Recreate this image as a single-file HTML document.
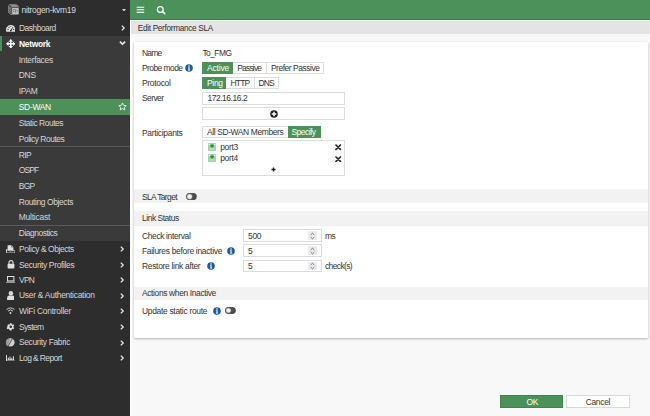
<!DOCTYPE html>
<html><head><meta charset="utf-8"><style>
html,body{margin:0;padding:0;}
body{width:650px;height:416px;overflow:hidden;position:relative;background:#f8f8f8;font-family:"Liberation Sans",sans-serif;}
body>div,body>svg{position:absolute;}
.t{white-space:nowrap;line-height:1;}
</style></head><body>
<div style="left:0.00px;top:0.00px;width:130.00px;height:416.00px;background:#2d2d2d"></div>
<div style="left:0.00px;top:35.60px;width:130.00px;height:205.40px;background:#3a3a3a"></div>
<div style="left:0.00px;top:35.60px;width:2.00px;height:15.90px;background:#4c9159"></div>
<div style="left:0.00px;top:146.20px;width:130.00px;height:1.00px;background:#5a5a5a"></div>
<div style="left:0.00px;top:224.60px;width:130.00px;height:1.00px;background:#5a5a5a"></div>
<div style="left:0.00px;top:98.50px;width:130.00px;height:16.20px;background:#4c9159"></div>
<div class="t" style="left:21.60px;top:6.00px;font-size:8.45px;letter-spacing:-0.3px;color:#dcdcdc;font-weight:normal;">nitrogen-kvm19</div>
<div class="t" style="left:19.00px;top:24.00px;font-size:8.45px;letter-spacing:-0.5px;color:#d6d6d6;font-weight:normal;">Dashboard</div>
<div class="t" style="left:19.00px;top:40.00px;font-size:8.45px;letter-spacing:-0.3px;color:#ffffff;font-weight:bold;">Network</div>
<div class="t" style="left:18.80px;top:56.00px;font-size:8.45px;letter-spacing:-0.3px;color:#d6d6d6;font-weight:normal;">Interfaces</div>
<div class="t" style="left:18.80px;top:71.00px;font-size:8.45px;letter-spacing:-0.3px;color:#d6d6d6;font-weight:normal;">DNS</div>
<div class="t" style="left:18.80px;top:87.00px;font-size:8.45px;letter-spacing:-0.3px;color:#d6d6d6;font-weight:normal;">IPAM</div>
<div class="t" style="left:18.80px;top:103.00px;font-size:8.45px;letter-spacing:-0.3px;color:#ffffff;font-weight:normal;">SD-WAN</div>
<div class="t" style="left:18.80px;top:119.00px;font-size:8.45px;letter-spacing:-0.45px;color:#d6d6d6;font-weight:normal;">Static Routes</div>
<div class="t" style="left:18.80px;top:135.00px;font-size:8.45px;letter-spacing:-0.47px;color:#d6d6d6;font-weight:normal;">Policy Routes</div>
<div class="t" style="left:18.80px;top:151.00px;font-size:8.45px;letter-spacing:-0.6px;color:#d6d6d6;font-weight:normal;">RIP</div>
<div class="t" style="left:18.80px;top:166.00px;font-size:8.45px;letter-spacing:-0.85px;color:#d6d6d6;font-weight:normal;">OSPF</div>
<div class="t" style="left:18.80px;top:182.00px;font-size:8.45px;letter-spacing:-0.75px;color:#d6d6d6;font-weight:normal;">BGP</div>
<div class="t" style="left:18.80px;top:198.00px;font-size:8.45px;letter-spacing:-0.39px;color:#d6d6d6;font-weight:normal;">Routing Objects</div>
<div class="t" style="left:18.80px;top:213.00px;font-size:8.45px;letter-spacing:-0.22px;color:#d6d6d6;font-weight:normal;">Multicast</div>
<div class="t" style="left:18.80px;top:229.00px;font-size:8.45px;letter-spacing:-0.47px;color:#d6d6d6;font-weight:normal;">Diagnostics</div>
<div class="t" style="left:19.00px;top:245.00px;font-size:8.45px;letter-spacing:-0.42px;color:#d6d6d6;font-weight:normal;">Policy &amp; Objects</div>
<div class="t" style="left:19.00px;top:261.00px;font-size:8.45px;letter-spacing:-0.33px;color:#d6d6d6;font-weight:normal;">Security Profiles</div>
<div class="t" style="left:19.00px;top:276.00px;font-size:8.45px;letter-spacing:-0.75px;color:#d6d6d6;font-weight:normal;">VPN</div>
<div class="t" style="left:19.00px;top:291.00px;font-size:8.45px;letter-spacing:-0.26px;color:#d6d6d6;font-weight:normal;">User &amp; Authentication</div>
<div class="t" style="left:19.00px;top:307.00px;font-size:8.45px;letter-spacing:-0.25px;color:#d6d6d6;font-weight:normal;">WiFi Controller</div>
<div class="t" style="left:19.00px;top:323.00px;font-size:8.45px;letter-spacing:-0.62px;color:#d6d6d6;font-weight:normal;">System</div>
<div class="t" style="left:19.00px;top:338.00px;font-size:8.45px;letter-spacing:-0.35px;color:#d6d6d6;font-weight:normal;">Security Fabric</div>
<div class="t" style="left:19.00px;top:354.00px;font-size:8.45px;letter-spacing:-0.59px;color:#d6d6d6;font-weight:normal;">Log &amp; Report</div>
<svg style="left:119.60px;top:25.10px" width="6" height="6" viewBox="0 0 6 6"><path d="M1.8 0.6 L4.2 3 L1.8 5.4" fill="none" stroke="#e6e6e6" stroke-width="1.3"/></svg>
<svg style="left:119.40px;top:246.00px" width="6" height="6" viewBox="0 0 6 6"><path d="M1.8 0.6 L4.2 3 L1.8 5.4" fill="none" stroke="#e6e6e6" stroke-width="1.3"/></svg>
<svg style="left:119.40px;top:261.62px" width="6" height="6" viewBox="0 0 6 6"><path d="M1.8 0.6 L4.2 3 L1.8 5.4" fill="none" stroke="#e6e6e6" stroke-width="1.3"/></svg>
<svg style="left:119.40px;top:277.24px" width="6" height="6" viewBox="0 0 6 6"><path d="M1.8 0.6 L4.2 3 L1.8 5.4" fill="none" stroke="#e6e6e6" stroke-width="1.3"/></svg>
<svg style="left:119.40px;top:292.86px" width="6" height="6" viewBox="0 0 6 6"><path d="M1.8 0.6 L4.2 3 L1.8 5.4" fill="none" stroke="#e6e6e6" stroke-width="1.3"/></svg>
<svg style="left:119.40px;top:308.48px" width="6" height="6" viewBox="0 0 6 6"><path d="M1.8 0.6 L4.2 3 L1.8 5.4" fill="none" stroke="#e6e6e6" stroke-width="1.3"/></svg>
<svg style="left:119.40px;top:324.10px" width="6" height="6" viewBox="0 0 6 6"><path d="M1.8 0.6 L4.2 3 L1.8 5.4" fill="none" stroke="#e6e6e6" stroke-width="1.3"/></svg>
<svg style="left:119.40px;top:339.72px" width="6" height="6" viewBox="0 0 6 6"><path d="M1.8 0.6 L4.2 3 L1.8 5.4" fill="none" stroke="#e6e6e6" stroke-width="1.3"/></svg>
<svg style="left:119.40px;top:355.34px" width="6" height="6" viewBox="0 0 6 6"><path d="M1.8 0.6 L4.2 3 L1.8 5.4" fill="none" stroke="#e6e6e6" stroke-width="1.3"/></svg>
<svg style="left:119.3px;top:40.4px" width="7" height="6" viewBox="0 0 7 6"><path d="M0.9 1.6 L3.5 4.2 L6.1 1.6" fill="none" stroke="#ececec" stroke-width="1.6"/></svg>
<svg style="left:121.8px;top:8.6px" width="4" height="2.6" viewBox="0 0 4 2.6"><path d="M0 0 L4 0 L2 2.6 Z" fill="#d0d0d0"/></svg>
<svg style="left:117.9px;top:101.9px" width="9" height="9" viewBox="0 0 24 24"><path d="M12 2.5 L14.9 8.9 L21.8 9.6 L16.6 14.3 L18.1 21.1 L12 17.6 L5.9 21.1 L7.4 14.3 L2.2 9.6 L9.1 8.9 Z" fill="none" stroke="#eaeaea" stroke-width="2.6" stroke-linejoin="round"/></svg>
<div style="left:130.00px;top:0.00px;width:520.00px;height:19.40px;background:#4c9159"></div>
<div style="left:130.00px;top:19.00px;width:520.00px;height:1.00px;background:#3f7a4b"></div>
<div style="left:130.00px;top:20.00px;width:520.00px;height:396.00px;background:#f8f8f8"></div>
<div style="left:130.00px;top:20.00px;width:2.20px;height:396.00px;background:#fdfdfd"></div>
<div style="left:131.00px;top:21.00px;width:519.00px;height:12.90px;background:#e4e4e4"></div>
<div class="t" style="left:137.80px;top:25.00px;font-size:8.2px;letter-spacing:-0.3px;color:#2e2e2e;font-weight:normal;">Edit Performance SLA</div>
<svg style="left:136px;top:6px" width="9" height="8" viewBox="0 0 9 8"><path d="M0.7 1.2 H8.2 M0.7 3.7 H8.2 M0.7 6.4 H8.2" stroke="#ffffff" stroke-width="1.1"/></svg>
<svg style="left:155.7px;top:5.2px" width="10" height="10" viewBox="0 0 10 10"><circle cx="4.3" cy="4.4" r="2.9" fill="none" stroke="#ffffff" stroke-width="1.25"/><path d="M6.3 6.4 L8.8 8.7" stroke="#ffffff" stroke-width="1.5" stroke-linecap="round"/></svg>
<div style="left:133.8px;top:41.6px;width:513.8px;height:296.4px;background:#fff;box-shadow:0 0.5px 2px rgba(0,0,0,0.28)"></div>
<div style="left:133.80px;top:188.60px;width:513.80px;height:14.80px;background:#f2f2f2"></div>
<div style="left:133.80px;top:211.00px;width:513.80px;height:14.50px;background:#f2f2f2"></div>
<div style="left:133.80px;top:286.50px;width:513.80px;height:13.70px;background:#f2f2f2"></div>
<div class="t" style="left:142.00px;top:49.00px;font-size:8.45px;letter-spacing:-0.8px;color:#333;font-weight:normal;">Name</div>
<div class="t" style="left:202.40px;top:49.00px;font-size:8.45px;letter-spacing:-0.55px;color:#333;font-weight:normal;">To_FMG</div>
<div class="t" style="left:142.00px;top:64.00px;font-size:8.45px;letter-spacing:-0.55px;color:#333;font-weight:normal;">Probe mode</div>
<div class="t" style="left:142.00px;top:79.00px;font-size:8.45px;letter-spacing:-0.3px;color:#333;font-weight:normal;">Protocol</div>
<div class="t" style="left:142.00px;top:94.00px;font-size:8.45px;letter-spacing:-0.56px;color:#333;font-weight:normal;">Server</div>
<div class="t" style="left:142.00px;top:129.00px;font-size:8.45px;letter-spacing:-0.3px;color:#333;font-weight:normal;">Participants</div>
<svg style="left:185.20px;top:63.60px" width="8" height="8" viewBox="0 0 8 8"><circle cx="4" cy="4" r="3.8" fill="#1e5c97"/><circle cx="4" cy="2.1" r="0.75" fill="#fff"/><path d="M2.9 3.3 H4.6 V5.7 H5.2 V6.4 H2.9 V5.7 H3.5 V4 H2.9 Z" fill="#fff"/></svg>
<div style="left:202.3px;top:61.6px;width:121.5px;height:12.1px;border:1px solid #dcdcdc;box-sizing:border-box;background:#fff"></div>
<div style="left:202.30px;top:61.60px;width:30.60px;height:12.10px;background:#4c9159"></div>
<div style="left:265.90px;top:61.60px;width:1.00px;height:12.10px;background:#dcdcdc"></div>
<div class="t" style="left:207.00px;top:64.00px;font-size:8.45px;letter-spacing:-0.15px;color:#ffffff;font-weight:normal;">Active</div>
<div class="t" style="left:237.30px;top:64.00px;font-size:8.45px;letter-spacing:-0.8px;color:#333;font-weight:normal;">Passive</div>
<div class="t" style="left:270.90px;top:64.00px;font-size:8.45px;letter-spacing:-0.45px;color:#333;font-weight:normal;">Prefer Passive</div>
<div style="left:202.3px;top:77px;width:76.4px;height:11.8px;border:1px solid #dcdcdc;box-sizing:border-box;background:#fff"></div>
<div style="left:202.30px;top:77.00px;width:23.70px;height:11.80px;background:#4c9159"></div>
<div style="left:253.60px;top:77.00px;width:1.00px;height:11.80px;background:#dcdcdc"></div>
<div class="t" style="left:207.00px;top:79.00px;font-size:8.45px;letter-spacing:-0.3px;color:#ffffff;font-weight:normal;">Ping</div>
<div class="t" style="left:230.40px;top:79.00px;font-size:8.45px;letter-spacing:-0.75px;color:#333;font-weight:normal;">HTTP</div>
<div class="t" style="left:258.50px;top:79.00px;font-size:8.45px;letter-spacing:-0.85px;color:#333;font-weight:normal;">DNS</div>
<div style="left:202.3px;top:91.7px;width:142.8px;height:12.9px;border:1px solid #dcdcdc;box-sizing:border-box;background:#fff"></div>
<div class="t" style="left:207.50px;top:94.00px;font-size:8.45px;letter-spacing:-0.45px;color:#333;font-weight:normal;">172.16.16.2</div>
<div style="left:202.3px;top:107.2px;width:142.8px;height:12.9px;border:1px solid #dcdcdc;box-sizing:border-box;background:#fff"></div>
<svg style="left:270px;top:109.5px" width="8" height="8" viewBox="0 0 8 8"><circle cx="4" cy="4" r="3.8" fill="#1e1e1e"/><path d="M4 1.7 V6.3 M1.7 4 H6.3" stroke="#fff" stroke-width="1.5"/></svg>
<div style="left:202.3px;top:125.5px;width:118.4px;height:12.3px;border:1px solid #dcdcdc;box-sizing:border-box;background:#fff"></div>
<div style="left:287.60px;top:125.50px;width:33.10px;height:12.30px;background:#4c9159"></div>
<div class="t" style="left:207.00px;top:128.00px;font-size:8.45px;letter-spacing:-0.38px;color:#333;font-weight:normal;">All SD-WAN Members</div>
<div class="t" style="left:291.50px;top:128.00px;font-size:8.45px;letter-spacing:-0.52px;color:#ffffff;font-weight:normal;">Specify</div>
<div style="left:202.3px;top:140.4px;width:142.6px;height:35.2px;border:1px solid #dcdcdc;box-sizing:border-box;background:#fff"></div>
<svg style="left:207.90px;top:142.90px" width="8.2" height="8.2" viewBox="0 0 8 8"><rect x="0" y="0" width="8" height="8" rx="0.5" fill="#9fd2a8"/><rect x="0.7" y="0.8" width="1.8" height="1.3" fill="#f2fbf3"/><rect x="5.5" y="0.8" width="1.8" height="1.3" fill="#f2fbf3"/><path d="M2.3 1.5 H5.7 V3.6 H4.8 V4.4 H3.2 V3.6 H2.3 Z" fill="#2e8a45"/><path d="M1 5.6 H7 M1 6.8 H7" stroke="#c4e6ca" stroke-width="0.6"/></svg>
<svg style="left:207.90px;top:154.10px" width="8.2" height="8.2" viewBox="0 0 8 8"><rect x="0" y="0" width="8" height="8" rx="0.5" fill="#9fd2a8"/><rect x="0.7" y="0.8" width="1.8" height="1.3" fill="#f2fbf3"/><rect x="5.5" y="0.8" width="1.8" height="1.3" fill="#f2fbf3"/><path d="M2.3 1.5 H5.7 V3.6 H4.8 V4.4 H3.2 V3.6 H2.3 Z" fill="#2e8a45"/><path d="M1 5.6 H7 M1 6.8 H7" stroke="#c4e6ca" stroke-width="0.6"/></svg>
<div class="t" style="left:220.20px;top:143.00px;font-size:8.45px;letter-spacing:-0.3px;color:#333;font-weight:normal;">port3</div>
<div class="t" style="left:220.20px;top:154.00px;font-size:8.45px;letter-spacing:-0.3px;color:#333;font-weight:normal;">port4</div>
<svg style="left:335.40px;top:144.20px" width="6.4" height="6.4" viewBox="0 0 6.4 6.4"><path d="M1 1 L5.4 5.4 M5.4 1 L1 5.4" stroke="#2a2a2a" stroke-width="1.7" stroke-linecap="round"/></svg>
<svg style="left:335.40px;top:156.00px" width="6.4" height="6.4" viewBox="0 0 6.4 6.4"><path d="M1 1 L5.4 5.4 M5.4 1 L1 5.4" stroke="#2a2a2a" stroke-width="1.7" stroke-linecap="round"/></svg>
<svg style="left:270.8px;top:167.1px" width="5" height="5" viewBox="0 0 5 5"><path d="M2.5 0.5 V4.5 M0.5 2.5 H4.5" stroke="#1e1e1e" stroke-width="1.4"/></svg>
<div class="t" style="left:142.00px;top:193.00px;font-size:8.45px;letter-spacing:-0.62px;color:#333;font-weight:normal;">SLA Target</div>
<svg style="left:186.00px;top:192.80px" width="10.80" height="7.20" viewBox="0 0 10.80 7.20"><rect x="0" y="0" width="10.80" height="7.20" rx="3.60" fill="#4d4d4d"/><circle cx="3.60" cy="3.60" r="2.60" fill="#f2f2f2" stroke="#8a8a8a" stroke-width="0.5"/></svg>
<div class="t" style="left:142.00px;top:214.00px;font-size:8.45px;letter-spacing:-0.46px;color:#333;font-weight:normal;">Link Status</div>
<div class="t" style="left:142.00px;top:232.00px;font-size:8.45px;letter-spacing:-0.36px;color:#333;font-weight:normal;">Check interval</div>
<div class="t" style="left:142.00px;top:247.00px;font-size:8.45px;letter-spacing:-0.3px;color:#333;font-weight:normal;">Failures before inactive</div>
<div class="t" style="left:142.00px;top:262.00px;font-size:8.45px;letter-spacing:-0.3px;color:#333;font-weight:normal;">Restore link after</div>
<svg style="left:226.60px;top:246.80px" width="8" height="8" viewBox="0 0 8 8"><circle cx="4" cy="4" r="3.8" fill="#1e5c97"/><circle cx="4" cy="2.1" r="0.75" fill="#fff"/><path d="M2.9 3.3 H4.6 V5.7 H5.2 V6.4 H2.9 V5.7 H3.5 V4 H2.9 Z" fill="#fff"/></svg>
<svg style="left:206.50px;top:261.80px" width="8" height="8" viewBox="0 0 8 8"><circle cx="4" cy="4" r="3.8" fill="#1e5c97"/><circle cx="4" cy="2.1" r="0.75" fill="#fff"/><path d="M2.9 3.3 H4.6 V5.7 H5.2 V6.4 H2.9 V5.7 H3.5 V4 H2.9 Z" fill="#fff"/></svg>
<div style="left:243.4px;top:229.20px;width:78.4px;height:13.00px;border:1px solid #dcdcdc;box-sizing:border-box;background:#fff"></div>
<div style="left:308px;top:231.20px;width:9.2px;height:9.00px;background:#ebebef"></div>
<svg style="left:310.2px;top:231.70px" width="5" height="8" viewBox="0 0 5 8"><path d="M0.7 2.9 L2.5 1.2 L4.3 2.9 M0.7 5.1 L2.5 6.8 L4.3 5.1" fill="none" stroke="#707070" stroke-width="0.95"/></svg>
<div class="t" style="left:248.00px;top:232.00px;font-size:8.45px;letter-spacing:-0.3px;color:#333;font-weight:normal;">500</div>
<div style="left:243.4px;top:244.40px;width:78.4px;height:12.90px;border:1px solid #dcdcdc;box-sizing:border-box;background:#fff"></div>
<div style="left:308px;top:246.40px;width:9.2px;height:8.90px;background:#ebebef"></div>
<svg style="left:310.2px;top:246.85px" width="5" height="8" viewBox="0 0 5 8"><path d="M0.7 2.9 L2.5 1.2 L4.3 2.9 M0.7 5.1 L2.5 6.8 L4.3 5.1" fill="none" stroke="#707070" stroke-width="0.95"/></svg>
<div class="t" style="left:248.00px;top:247.00px;font-size:8.45px;letter-spacing:-0.3px;color:#333;font-weight:normal;">5</div>
<div style="left:243.4px;top:259.60px;width:78.4px;height:12.90px;border:1px solid #dcdcdc;box-sizing:border-box;background:#fff"></div>
<div style="left:308px;top:261.60px;width:9.2px;height:8.90px;background:#ebebef"></div>
<svg style="left:310.2px;top:262.05px" width="5" height="8" viewBox="0 0 5 8"><path d="M0.7 2.9 L2.5 1.2 L4.3 2.9 M0.7 5.1 L2.5 6.8 L4.3 5.1" fill="none" stroke="#707070" stroke-width="0.95"/></svg>
<div class="t" style="left:248.00px;top:262.00px;font-size:8.45px;letter-spacing:-0.3px;color:#333;font-weight:normal;">5</div>
<div class="t" style="left:325.00px;top:232.00px;font-size:8.45px;letter-spacing:-0.6px;color:#333;font-weight:normal;">ms</div>
<div class="t" style="left:325.00px;top:262.00px;font-size:8.45px;letter-spacing:-0.6px;color:#333;font-weight:normal;">check(s)</div>
<div class="t" style="left:142.00px;top:289.00px;font-size:8.45px;letter-spacing:-0.365px;color:#333;font-weight:normal;">Actions when Inactive</div>
<div class="t" style="left:142.00px;top:307.00px;font-size:8.45px;letter-spacing:-0.3px;color:#333;font-weight:normal;">Update static route</div>
<svg style="left:213.10px;top:306.60px" width="8" height="8" viewBox="0 0 8 8"><circle cx="4" cy="4" r="3.8" fill="#1e5c97"/><circle cx="4" cy="2.1" r="0.75" fill="#fff"/><path d="M2.9 3.3 H4.6 V5.7 H5.2 V6.4 H2.9 V5.7 H3.5 V4 H2.9 Z" fill="#fff"/></svg>
<svg style="left:225.00px;top:307.30px" width="10.80" height="7.00" viewBox="0 0 10.80 7.00"><rect x="0" y="0" width="10.80" height="7.00" rx="3.50" fill="#4d4d4d"/><circle cx="3.50" cy="3.50" r="2.50" fill="#f2f2f2" stroke="#8a8a8a" stroke-width="0.5"/></svg>
<div style="left:500px;top:394.8px;width:62.6px;height:12.9px;background:#4c9159;border:0.7px solid #3e8350;box-sizing:border-box"></div>
<div style="left:566.3px;top:394.6px;width:63.3px;height:13.3px;border:1px solid #d8d8d8;box-sizing:border-box;background:#fff"></div>
<div class="t" style="left:432.30px;width:200px;text-align:center;top:398.00px;font-size:8.45px;letter-spacing:-0.3px;color:#ffffff;font-weight:normal;">OK</div>
<div class="t" style="left:497.90px;width:200px;text-align:center;top:398.00px;font-size:8.45px;letter-spacing:-0.3px;color:#333;font-weight:normal;">Cancel</div>
<svg style="left:7.6px;top:4.3px" width="11.6" height="10.8" viewBox="0 0 11.6 10.8"><path d="M2 0.4 H8.6 L11.2 2.8 V9.2 L9.8 10.4 H2.6 L0.4 8.4 V1.8 Z" fill="#3a3a3a" stroke="#9a9a9a" stroke-width="0.8"/><path d="M2 0.9 H8.4 L10.6 3.2 H3.8 Z" fill="#8c8c8c"/><path d="M0.9 1.9 L3.6 3.4 V9.9 L0.9 8.2 Z" fill="#6e6e6e"/><rect x="4.1" y="3.9" width="6.6" height="6.1" fill="#bdbdbd"/><path d="M5 5.6 H6.6 M5 7.4 H6.4 M7.6 5.2 V8.6 M8.6 6.8 H9.9" stroke="#5a5a5a" stroke-width="0.7"/></svg>
<svg style="left:5.7px;top:25.3px" width="9.7" height="6.9" viewBox="0 0 9.7 6.9"><path d="M0.37 6.7 A4.85 4.85 0 1 1 9.33 6.7 Z" fill="#e2e2e2"/><path d="M4.85 5.6 L6.9 2.2" stroke="#2d2d2d" stroke-width="0.9"/><circle cx="4.85" cy="5.6" r="0.9" fill="#2d2d2d"/><circle cx="2.0" cy="4.4" r="0.65" fill="#2d2d2d"/><circle cx="3.0" cy="2.3" r="0.65" fill="#2d2d2d"/><circle cx="4.85" cy="1.5" r="0.55" fill="#2d2d2d"/><circle cx="7.7" cy="4.4" r="0.65" fill="#2d2d2d"/></svg>
<svg style="left:5.6px;top:38.8px" width="9.6" height="9.6" viewBox="0 0 10 10"><path d="M5 0 L7.3 2.6 H2.7 Z M5 10 L7.3 7.4 H2.7 Z M0 5 L2.6 2.7 V7.3 Z M10 5 L7.4 2.7 V7.3 Z" fill="#ffffff"/><path d="M4.25 2 H5.75 V8 H4.25 Z M2 4.25 H8 V5.75 H2 Z" fill="#ffffff"/></svg>
<svg style="left:5.8px;top:244.6px" width="9.4" height="8.6" viewBox="0 0 9.4 8.6"><path d="M1.6 0.3 H5.6 L7.4 2.1 V5.6 H1.6 Z" fill="#e0e0e0"/><path d="M5.6 0.3 V2.1 H7.4" fill="none" stroke="#2d2d2d" stroke-width="0.5"/><path d="M0.5 4.2 V7.6 Q0.5 8.1 1 8.1 H8.4 Q8.9 8.1 8.9 7.6 V5.4" fill="none" stroke="#e0e0e0" stroke-width="0.95"/><path d="M0.9 4.7 Q4 7.2 8.6 5.3" fill="none" stroke="#e0e0e0" stroke-width="0.7"/></svg>
<svg style="left:6.5px;top:260px" width="8" height="8.5" viewBox="0 0 8 8.5"><path d="M2 4 V2.6 A2 2 0 0 1 6 2.6 V4" fill="none" stroke="#e0e0e0" stroke-width="1.1"/><rect x="0.6" y="3.8" width="6.8" height="4.6" rx="0.6" fill="#e0e0e0"/></svg>
<svg style="left:5.8px;top:276.3px" width="9.4" height="6.8" viewBox="0 0 9.4 6.8"><rect x="1.5" y="0.5" width="6.4" height="4.4" fill="none" stroke="#e0e0e0" stroke-width="1"/><path d="M0.2 5.7 H9.2 V6.6 H0.2 Z" fill="#e0e0e0"/></svg>
<svg style="left:6.6px;top:291px" width="7.8" height="9" viewBox="0 0 7.8 9"><circle cx="3.9" cy="2.3" r="2.2" fill="#e0e0e0"/><path d="M0.1 8.9 V7 A2.4 2.4 0 0 1 2.5 4.6 H5.3 A2.4 2.4 0 0 1 7.7 7 V8.9 Z" fill="#e0e0e0"/><circle cx="3.9" cy="2.3" r="0.8" fill="#bdbdbd"/></svg>
<svg style="left:6px;top:307px" width="9" height="7" viewBox="0 0 9 7"><path d="M0.5 2.6 A5.8 5.8 0 0 1 8.5 2.6 M2 4.1 A3.6 3.6 0 0 1 7 4.1" fill="none" stroke="#e0e0e0" stroke-width="0.9"/><circle cx="4.5" cy="6" r="0.9" fill="#e0e0e0"/></svg>
<svg style="left:5.5px;top:322px" width="9.6" height="9.6" viewBox="0 0 24 24"><path fill="#e0e0e0" d="M19.4 13a7.5 7.5 0 0 0 0-2l2.1-1.6-2-3.5-2.5 1a7.6 7.6 0 0 0-1.7-1L15 3h-4l-.4 2.9a7.6 7.6 0 0 0-1.7 1l-2.5-1-2 3.5L4.5 11a7.5 7.5 0 0 0 0 2l-2.1 1.6 2 3.5 2.5-1a7.6 7.6 0 0 0 1.7 1L11 21h4l.4-2.9a7.6 7.6 0 0 0 1.7-1l2.5 1 2-3.5zM13 15.2a3.2 3.2 0 1 1 0-6.4 3.2 3.2 0 0 1 0 6.4z" transform="translate(-1 0)"/></svg>
<svg style="left:5.8px;top:338.2px" width="8.8" height="8.8" viewBox="0 0 9 9"><circle cx="4.5" cy="4.5" r="4.3" fill="#cfcfcf"/><path d="M4.5 0.2 A4.3 4.3 0 0 0 2 8.3 Z" fill="#9a9a9a"/><path d="M2.4 8 L6.4 0.8" stroke="#2d2d2d" stroke-width="0.8"/></svg>
<svg style="left:5.8px;top:354.5px" width="9" height="6.6" viewBox="0 0 9 6.6"><path d="M0.5 0 V6.1 H8.8" fill="none" stroke="#e0e0e0" stroke-width="0.95"/><path d="M2.3 4.9 V2.6 M4 4.9 V1.6 M5.7 4.9 V2.9 M7.4 4.9 V1.2" stroke="#e0e0e0" stroke-width="1"/><path d="M1.6 4.6 H8.2" stroke="#e0e0e0" stroke-width="0.7"/></svg>
</body></html>
